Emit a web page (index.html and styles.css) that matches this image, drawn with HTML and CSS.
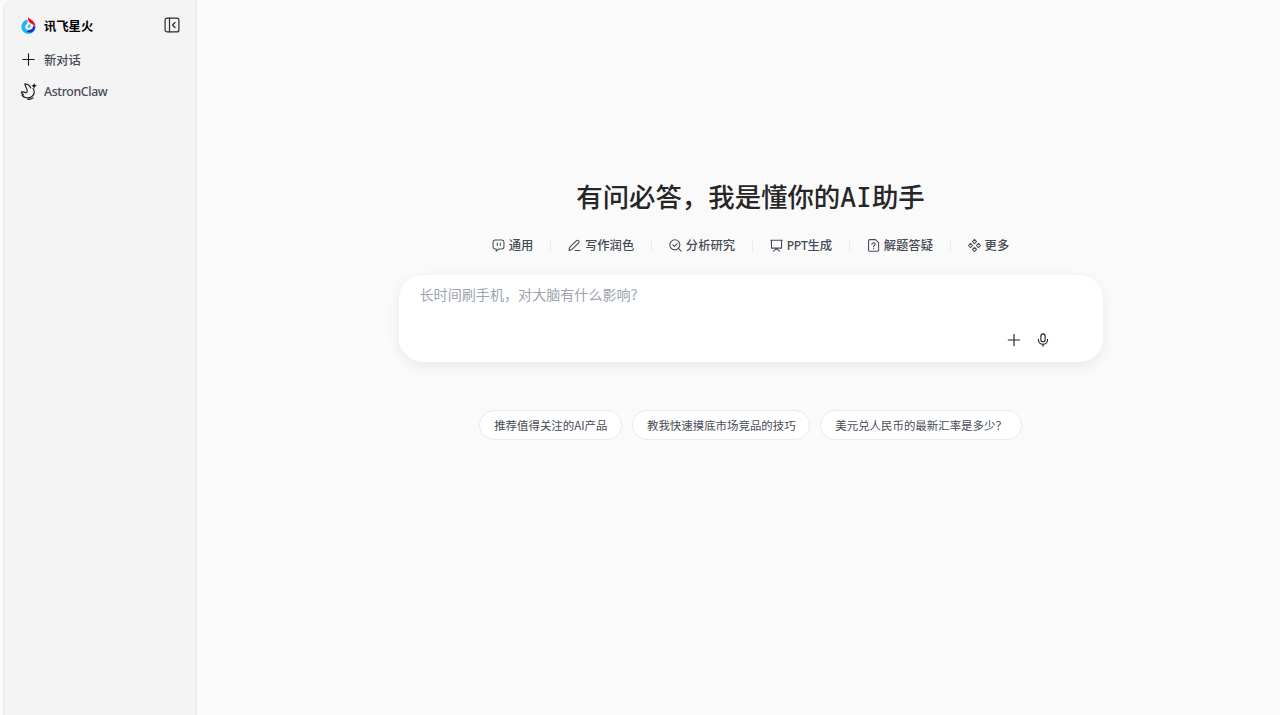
FILE: index.html
```html
<!DOCTYPE html>
<html lang="zh-CN">
<head>
    <meta charset="UTF-8">
    <meta name="viewport" content="width=device-width, initial-scale=1.0">
    <title>讯飞星火</title>
    <link rel="stylesheet" href="styles.css">
</head>
<body>
    <div class="app">
        <aside class="sidebar">
            <div class="brand">
                <svg class="brand-logo" viewBox="0 0 15 17">
                    <path d="M5.200 2.800C2.300 4.200.4 6.500.4 9.600a7 7 0 0 0 12.900 3.900L10.500 12C8.500 13.700 4.100 13 4.100 10c0-2 2.700-3.300 2.700-5.200 0-.9-.7-1.600-1.600-2Z" fill="#22b4fb"/>
                    <path d="M6.900 .2C9.500 2.600 14.500 4.400 14.400 9.200 12.200 7.200 6.500 6.200 6.900 .2Z" fill="#fb0510"/>
                    <path d="M8.200 6.300c.2 1.700-1.900 2.200-1.900 3.500 0 1.400 2.500 1.600 3.200.3.500-.9-.3-2.300-1.300-3.800Z" fill="#35cdf8"/>
                    <path d="M11.800 8.500c.8 2.200-.8 4.300-3.300 4.400L5.500 14.500C8 16.500 12 15.500 13.500 13c.8-1.300 1-2.400.9-3.300-.8-.6-1.600-.9-2.600-1.200Z" fill="#0a36dc"/>
                </svg>
                <span class="brand-name">讯飞星火</span>
                <svg class="icon collapse" viewBox="0 0 16 16">
                    <rect x="1.100" y="1.100" width="13.800" height="13.800" rx="2"/>
                    <path d="M5.500 1v14M11 5.500 8.500 8l2.500 2.500"/>
                </svg>
            </div>
            <a class="side-item">
                <svg class="icon" viewBox="0 0 16 16"><path d="M8 2.600v10.800M2.600 8h10.800"/></svg>
                <span>新对话</span>
            </a>
            <a class="side-item">
                <svg class="icon" viewBox="0 0 16 16">
                    <path d="M4.600 .8C4.800 3 5.900 4.200 6.500 6c.5 1.500.2 2.700-.6 3.300C4.700 8.800 3.200 8.100 1.200 8.500c.4 1.300 1.100 1.800 2 2.500-.5.200-1 .2-1.300.4 1.500 2.800 6.300 3.500 9.300 1.300 2.400-1.800 2.700-4.900 1.100-7.600M4.600 .8c2.700.2 4.700 1.600 5.500 3.900M7.500 15.400c1.900.1 3.600-.4 4.900-1.400"/>
                    <path class="solid" d="M13.300 0l.8 1.900 1.900.8-1.900.8-.8 1.900-.8-1.900-1.900-.8 1.900-.8Z"/>
                </svg>
                <span class="latin">AstronClaw</span>
            </a>
        </aside>

        <main class="main">
            <h1 class="title">有问必答，我是懂你的AI助手</h1>

            <nav class="tabs">
                <a class="tab">
                    <svg class="icon" viewBox="0 0 16 16"><path d="M4 1.200h8a2.700 2.700 0 0 1 2.700 2.700v5.600A2.700 2.700 0 0 1 12 12.200H8.500L5.200 15v-2.800H4a2.700 2.700 0 0 1-2.700-2.700V3.900A2.700 2.700 0 0 1 4 1.200ZM6.500 5v3M10.200 5v3"/></svg>
                    <span>通用</span>
                </a>
                <a class="tab">
                    <svg class="icon" viewBox="0 0 16 16"><path d="M1.200 14l.8-3.600 8.400-8.400a1.600 1.600 0 0 1 2.300 0l.4.400a1.600 1.600 0 0 1 0 2.300L4.700 13.200ZM8.800 14.200h6"/></svg>
                    <span>写作润色</span>
                </a>
                <a class="tab">
                    <svg class="icon" viewBox="0 0 16 16"><circle cx="7.200" cy="7.200" r="6.200"/><path d="M11.600 11.600 15 15M4.700 7.200l1.900 1.900 3.500-3.500"/></svg>
                    <span>分析研究</span>
                </a>
                <a class="tab">
                    <svg class="icon" viewBox="0 0 16 16"><path d="M.8 1.600h14.400M1.800 1.600v9.600h12.400V1.600M8 11.200v1.300M4.200 15 8 11.800 11.800 15"/></svg>
                    <span><span class="latin">PPT</span>生成</span>
                </a>
                <a class="tab">
                    <svg class="icon" viewBox="0 0 16 16"><path d="M3.300 .8h7.200l3.800 3.600v9.300a1.400 1.400 0 0 1-1.400 1.400H3.300a1.400 1.400 0 0 1-1.400-1.400V2.200A1.400 1.400 0 0 1 3.300 .8ZM6 6.500c0-2.400 4.100-2.300 4.100 0C10.100 8 8.100 7.900 8.100 9.500M8.100 11.300v.8"/></svg>
                    <span>解题答疑</span>
                </a>
                <a class="tab">
                    <svg class="icon" viewBox="0 0 16 16"><path d="M8 .6l2.500 2.500L8 5.600 5.500 3.100ZM8 10.400l2.500 2.500L8 15.400l-2.500-2.500ZM3.100 5.500 5.600 8l-2.500 2.500L.6 8ZM12.900 5.500 15.400 8l-2.500 2.500L10.400 8Z"/></svg>
                    <span>更多</span>
                </a>
            </nav>

            <div class="chat-box">
                <div class="chat-placeholder">长时间刷手机，对大脑有什么影响?</div>
                <div class="chat-tools">
                    <svg class="icon" viewBox="0 0 16 16"><path d="M8 1.500v13M1.500 8h13"/></svg>
                    <svg class="icon" viewBox="0 0 16 16"><rect x="5.600" y="1" width="4.800" height="9" rx="2.400"/><path d="M2.800 7.200v.8a5.200 4.800 0 0 0 10.400 0v-.8M8 12.800v2.200"/></svg>
                </div>
            </div>

            <div class="suggestions">
                <a class="suggestion">推荐值得关注的AI产品</a>
                <a class="suggestion">教我快速摸底市场竞品的技巧</a>
                <a class="suggestion">美元兑人民币的最新汇率是多少？</a>
            </div>
        </main>
    </div>
</body>
</html>
```
FILE: styles.css
```css
* {
    box-sizing: border-box;
}

body {
    margin: 0;
    background: #fafafa;
    font-family: "Noto Sans CJK SC", sans-serif;
    font-size: 12.32px;
    font-weight: 500;
    color: #464b55;
}

.app {
    display: flex;
    height: 100vh;
    padding-left: 3px;
    overflow: hidden;
}

.icon {
    flex: none;
    width: 13px;
    height: 13px;
    fill: none;
    stroke: currentColor;
    stroke-width: 1.3;
    stroke-linecap: round;
    stroke-linejoin: round;
}

.icon .solid {
    fill: currentColor;
    stroke: none;
}

.latin {
    font-family: "Noto Sans", sans-serif;
    letter-spacing: -0.37px;
}

/* 侧边栏 */
.sidebar {
    flex: none;
    width: 194px;
    padding: 9px 16px 0 17px;
    background: #f4f4f4;
    border: 1px solid #e8e8e8;
    border-width: 0 1px;
    border-top-left-radius: 10px;
}

.brand {
    display: flex;
    align-items: center;
    height: 32px;
    margin-bottom: 2px;
    color: #2b2d31;
}

.brand-logo {
    width: 15px;
    height: 17px;
    margin-right: 8px;
}

.brand-name {
    padding-top: 1px;
    font-weight: 700;
    color: #000;
}

.collapse {
    width: 16px;
    height: 16px;
    margin-left: auto;
    stroke-width: 1.2;
}

.side-item {
    display: flex;
    align-items: center;
    gap: 7px;
    height: 32px;
    margin-left: -1px;
}

.side-item span {
    padding-top: 1px;
}

.side-item .icon {
    width: 17px;
    height: 17px;
    color: #17191d;
    stroke-width: 1.05;
}

/* 主区域 */
.main {
    flex: 1;
    display: flex;
    flex-direction: column;
    align-items: center;
    padding: 177px 0 0 24px;
}

.title {
    margin: 0;
    height: 40px;
    line-height: 40px;
    font-family: "Noto Sans Mono", "Noto Sans CJK SC", monospace;
    font-size: 26.4px;
    font-weight: 500;
    color: #262626;
}

.tabs {
    display: flex;
    margin-top: 18px;
    height: 20px;
}

.tab {
    display: flex;
    align-items: center;
    gap: 4px;
}

.tab + .tab::before {
    content: "";
    width: 1px;
    height: 11px;
    margin: 0 12.8px 0 16.8px;
    background: #e7eaf0;
}

.chat-box {
    display: flex;
    flex-direction: column;
    justify-content: space-between;
    width: 704px;
    height: 87px;
    margin-top: 20px;
    padding: 8px 53px 15px 21px;
    background: #fff;
    border-radius: 24px;
    box-shadow: 0 4px 14px rgba(0, 0, 0, 0.07);
}

.chat-placeholder {
    line-height: 22px;
    font-size: 14.08px;
    font-weight: 400;
    color: #9ca3af;
}

.chat-tools {
    display: flex;
    justify-content: flex-end;
    gap: 15px;
    color: #222;
}

.chat-tools .icon {
    width: 14px;
    height: 14px;
}

.suggestions {
    display: flex;
    gap: 10px;
    margin-top: 48px;
}

.suggestion {
    height: 30px;
    padding: 0 13.8px;
    line-height: 29px;
    font-size: 11.44px;
    font-weight: 400;
    color: #464b55;
    background: #fff;
    border: 1px solid #ebebeb;
    border-radius: 16px;
}
```
